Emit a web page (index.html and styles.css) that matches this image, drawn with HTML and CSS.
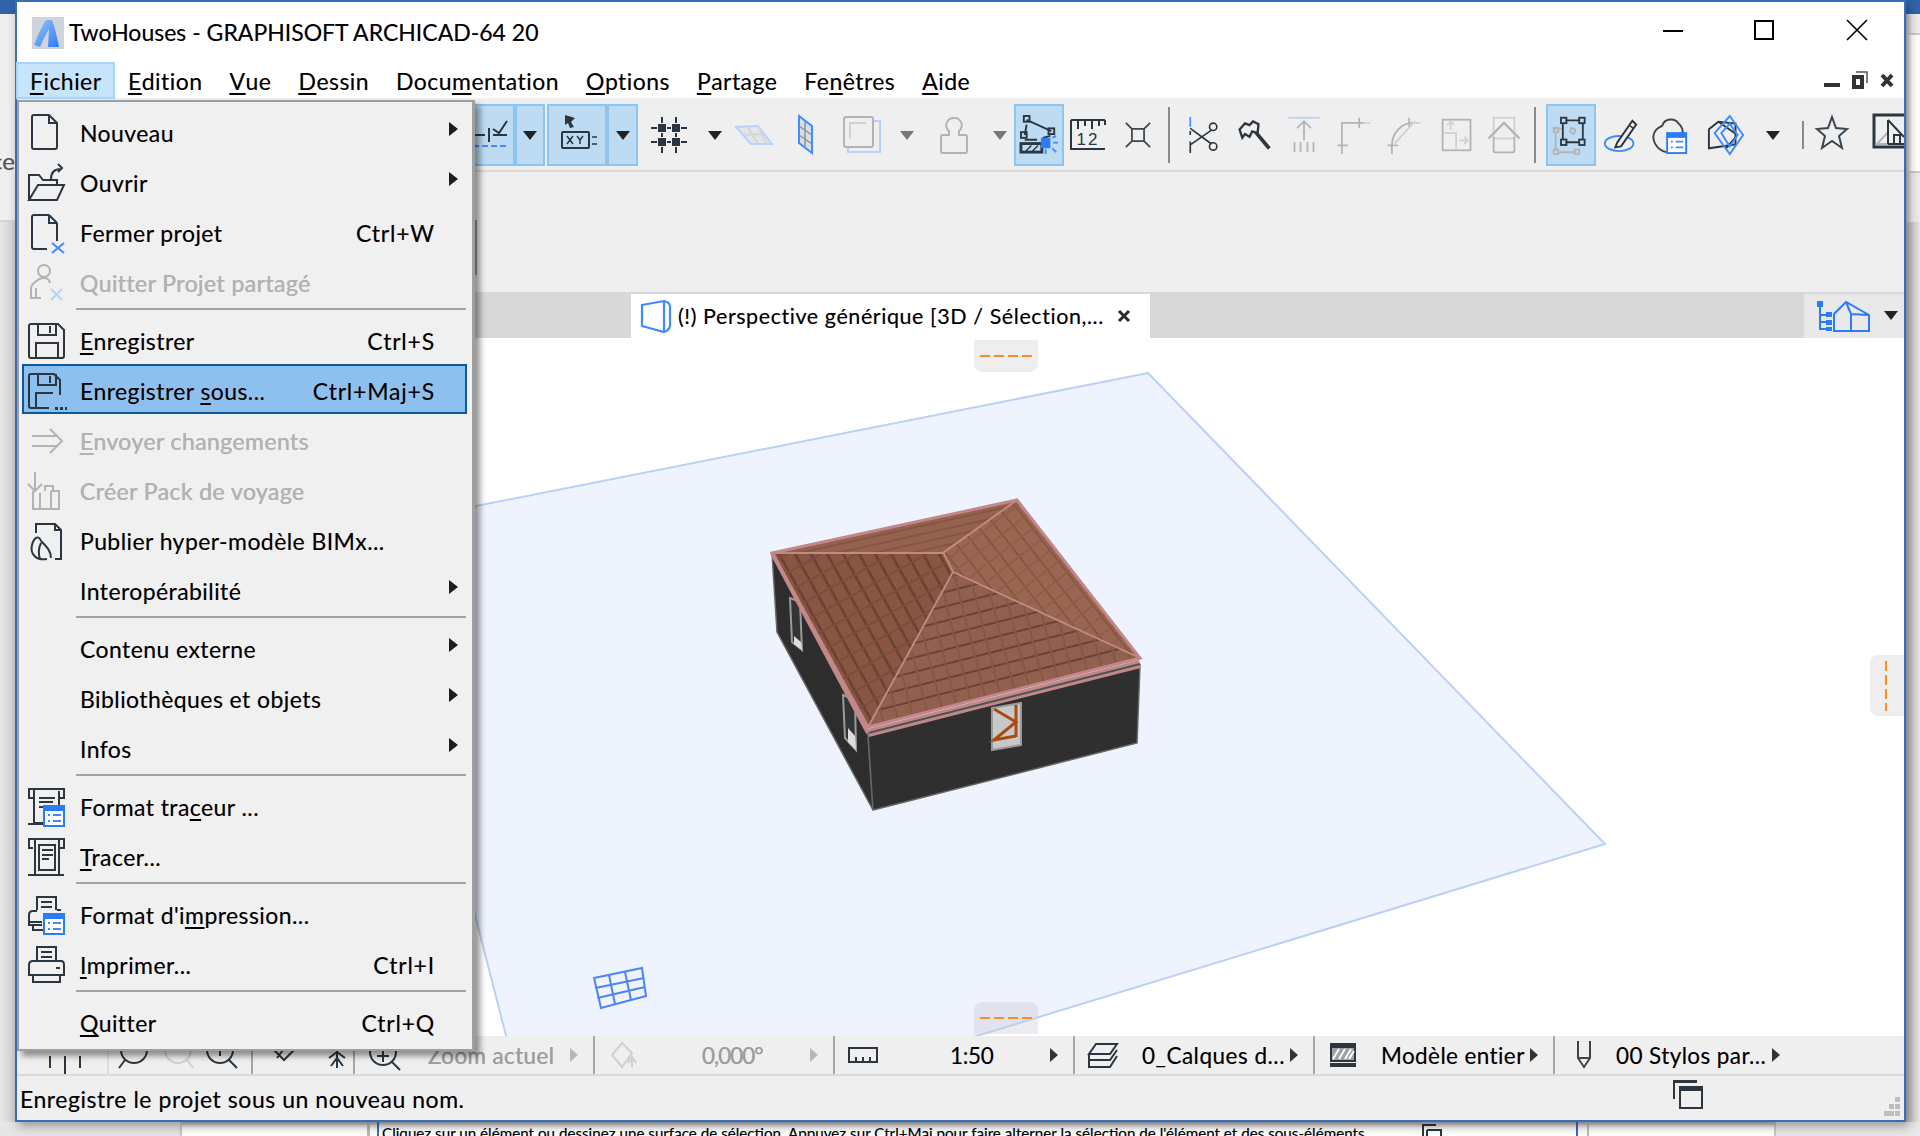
FILE: index.html
```html
<!DOCTYPE html>
<html lang="fr">
<head>
<meta charset="utf-8">
<title>TwoHouses - GRAPHISOFT ARCHICAD-64 20</title>
<link rel="stylesheet" href="styles.css">
</head>
<body>
<div class="side side-left"><div class="side-top"></div><div class="side-text"><span>ce</span></div><div class="side-low"></div></div>
<div class="window">
  <header class="titlebar">
    <svg class="app-icon" width="32" height="32" viewBox="0 0 32 32"><defs><linearGradient id="lg" x1="0" y1="0" x2="1" y2="1"><stop offset="0" stop-color="#9cc3f7"/><stop offset="1" stop-color="#2a7cf8"/></linearGradient></defs><rect width="32" height="32" fill="#cfd3da"/><path d="M2 28 Q8 12 14 3 H20 Q24 14 27 30 H16 L17 12 Q12 20 8 30 Z" fill="url(#lg)"/></svg>
    <span class="title">TwoHouses - GRAPHISOFT ARCHICAD-64 20</span>
    <div class="winctl">
      <svg width="20" height="20" viewBox="0 0 20 20" class="ctl-min"><path d="M0 10H20" stroke="#000" stroke-width="2"/></svg>
      <svg width="20" height="20" viewBox="0 0 20 20" class="ctl-max"><rect x="1" y="1" width="18" height="18" fill="none" stroke="#000" stroke-width="2"/></svg>
      <svg width="20" height="20" viewBox="0 0 20 20" class="ctl-close"><path d="M0 0L20 20M20 0L0 20" stroke="#000" stroke-width="1.6"/></svg>
    </div>
  </header>
  <nav class="menubar">
    <span class="mb-item mb-open"><u>F</u>ichier</span>
    <span class="mb-item"><u>E</u>dition</span>
    <span class="mb-item"><u>V</u>ue</span>
    <span class="mb-item"><u>D</u>essin</span>
    <span class="mb-item">Docu<u>m</u>entation</span>
    <span class="mb-item"><u>O</u>ptions</span>
    <span class="mb-item"><u>P</u>artage</span>
    <span class="mb-item">Fe<u>n</u>êtres</span>
    <span class="mb-item"><u>A</u>ide</span>
    <div class="mdi">
      <svg width="16" height="18" viewBox="0 0 16 18"><rect y="12" width="16" height="4" fill="#333"/></svg>
      <svg width="16" height="18" viewBox="0 0 16 18"><path d="M4 1H15V12" fill="none" stroke="#555" stroke-width="1.5"/><rect x="2" y="6" width="8" height="10" fill="none" stroke="#333" stroke-width="4"/></svg>
      <svg width="14" height="18" viewBox="0 0 14 18"><path d="M2 4L12 15M12 4L2 15" stroke="#333" stroke-width="4"/></svg>
    </div>
  </nav>

  <div class="toolbar">
    <div class="cell on"><svg width="40" height="40" viewBox="0 0 40 40"><path class="s" d="M2 20H14M18 13V27M22 20H36M22 14L28 18 36 6"/><path class="b" d="M2 31H36" stroke-dasharray="6 3"/></svg></div>
    <div class="cell on"><i class="tri"></i></div>
    <div class="cell on gapl"><svg width="40" height="44" viewBox="0 0 40 44"><path d="M8 2L18 5 14 9 17 14 13 15 11 10 8 12Z" fill="#2b3640"/><rect class="s" x="5" y="19" width="27" height="16" rx="1"/><path class="s thin" d="M10 23l6 8M16 23l-6 8M20 23l3 4 3-4M23 27v4M35 24h5M35 31h5"/></svg></div>
    <div class="cell on"><i class="tri"></i></div>
    <div class="cell"><svg width="40" height="40" viewBox="0 0 40 40"><path class="s" d="M2 13H8M18 13H22M32 13H38M2 27H8M18 27H22M32 27H38M13 2V8M13 18V22M13 32V38M27 2V8M27 18V22M27 32V38"/><rect x="9" y="9" width="8" height="8" fill="#2b3640"/><rect x="23" y="9" width="8" height="8" fill="#2b3640"/><rect x="9" y="23" width="8" height="8" fill="#2b3640"/><rect x="23" y="23" width="8" height="8" fill="#2b3640"/></svg></div>
    <div class="cell"><i class="tri"></i></div>
    <div class="cell"><svg width="40" height="40" viewBox="0 0 40 40"><path d="M2 12L24 11 38 29 17 29Z" fill="#e2e5ea" stroke="#b4d2fb" stroke-width="2"/><path d="M9 20L30 19M13 11L24 29M24 11L33 29" stroke="#d4d6da" stroke-width="2"/></svg></div>
    <div class="cell"><svg width="20" height="40" viewBox="0 0 20 40"><path d="M4 1L17 11V38L4 28Z" fill="#d8dde6" stroke="#3f8cff" stroke-width="2"/><path d="M4 11L17 20M4 20L17 29M10 6V33" stroke="#8b949c" stroke-width="1.5"/></svg></div>
    <div class="cell"><svg width="40" height="40" viewBox="0 0 40 40"><path class="bl" d="M6 33V37H38V6H32"/><rect class="g" x="2" y="2" width="29" height="30" rx="2"/><path class="gl" d="M8 24V8H24"/></svg></div>
    <div class="cell"><i class="tri dim"></i></div>
    <div class="cell"><svg width="28" height="40" viewBox="0 0 28 40"><path class="g" d="M9 16C4 12 6 3 14 3S24 12 19 16V20H25Q27 20 27 22V36Q27 38 25 38H3Q1 38 1 36V22Q1 20 3 20H9Z"/></svg></div>
    <div class="cell"><i class="tri dim"></i></div>
    <div class="cell on"><svg width="38" height="40" viewBox="0 0 40 42"><path class="s" d="M7 5L33 17M7 10L5 21M32 22L24 24M5 26L18 26"/><rect class="s" x="4" y="1" width="6" height="6"/><rect class="s" x="1" y="18" width="6" height="6"/><rect class="s" x="30" y="14" width="6" height="6"/><rect x="1" y="30" width="22" height="9" fill="none" stroke="#2b3640" stroke-width="3"/><path class="s thin" d="M6 38L12 32M13 38L19 32"/><rect x="22" y="24" width="10" height="11" fill="#2a7cf8"/><path class="b" d="M34 24L38 22M35 29H40M34 35L38 39M27 36V41"/></svg></div>
    <div class="cell"><svg width="36" height="30" viewBox="0 0 36 30"><path class="s" d="M1 0H35M1 0V29H35M35 0V5M8 0V9M15 0V6M22 0V9M29 0V6"/><text x="18" y="25" class="ruler-num">12</text></svg></div>
    <div class="cell"><svg width="26" height="28" viewBox="0 0 30 30"><path class="sg" d="M1 1L8 8M29 1L22 8M1 29L8 22M29 29L22 22M8 8H22V22H8Z"/></svg></div>
    <div class="cell"><i class="vsep"></i></div>
    <div class="cell"><svg width="36" height="36" viewBox="0 0 38 44"><path class="b" d="M1 0V12"/><path class="s" d="M1 17V22M1 30V44M1 14L27 33M1 34L27 16"/><circle class="s" cx="29" cy="12" r="4.5"/><circle class="s" cx="29" cy="36" r="4.5"/></svg></div>
    <div class="cell"><svg width="38" height="36" viewBox="0 0 38 40"><path class="s wide" d="M3 14L9 7 14 9 18 5 24 8 23 18 17 16 14 22 9 19 6 23Z"/><path d="M21 17L36 35" stroke="#2b3640" stroke-width="4"/></svg></div>
    <div class="cell"><svg width="36" height="38" viewBox="0 0 38 44"><path class="bl" d="M1 2H37"/><path class="g" d="M19 28V6M11 14L19 6 27 14M8 30V42M15 30V42M23 30V42M30 30V42"/></svg></div>
    <div class="cell"><svg width="36" height="38" viewBox="0 0 38 44"><path class="g" d="M5 34V8H30M25 2V14M0 34H12M5 34V44"/><path class="gl" d="M30 8H38"/></svg></div>
    <div class="cell"><svg width="36" height="38" viewBox="0 0 38 44"><path class="g" d="M5 34C5 20 16 8 29 8M25 2V14M0 34H12M5 34V44"/><path class="gl" d="M8 32L32 6M30 8H38"/></svg></div>
    <div class="cell"><svg width="32" height="36" viewBox="0 0 34 40"><rect class="g" x="1" y="3" width="31" height="34"/><path class="gl" d="M1 18H16V37M10 14V6M6 9L10 5 14 9M20 26H29M25 22L29 26 25 30"/></svg></div>
    <div class="cell"><svg width="36" height="38" viewBox="0 0 38 44"><rect class="gl" x="7" y="2" width="24" height="24"/><path class="g wide" d="M1 26L19 8 37 26"/><path class="g" d="M7 24V40Q7 42 9 42H29Q31 42 31 40V24"/></svg></div>
    <div class="cell"><i class="vsep sep-l"></i></div>
    <div class="cell on"><svg width="38" height="40" viewBox="0 0 40 44"><path class="s" d="M14 6H30M33 9V27M14 30H30M11 9V27"/><rect class="s" x="9" y="3" width="6" height="6"/><rect class="s" x="29" y="3" width="6" height="6"/><rect class="s" x="9" y="27" width="6" height="6"/><rect class="s" x="29" y="27" width="6" height="6"/><path class="g" d="M3 20V38M7 41H24M2 15H10"/><rect class="g" x="1" y="38" width="5" height="5"/><rect class="g" x="24" y="38" width="5" height="5"/><rect class="g" x="1" y="14" width="5" height="5"/><path class="g" d="M20 14L25 16 23 21 19 19Z"/></svg></div>
    <div class="cell"><svg width="36" height="38" viewBox="0 0 36 40"><ellipse class="b" cx="16" cy="29" rx="15" ry="8"/><path d="M14 28L30 5 34 9 18 32 12 33Z" fill="#eee" stroke="#2b3640" stroke-width="2"/><path class="s thin" d="M27 10L31 13"/></svg></div>
    <div class="cell"><svg width="38" height="38" viewBox="0 0 40 40"><path class="sg" d="M16 38C6 36 1 26 3 19 5 12 10 12 12 10 14 3 25 1 29 8 33 11 34 16 33 19"/><rect x="17" y="18" width="20" height="21" fill="#fff" stroke="#2a7cf8" stroke-width="2"/><rect x="17" y="18" width="20" height="5" fill="#2a7cf8"/><path class="b" d="M21 27H23M26 27H34M21 33H23M26 33H34"/></svg></div>
    <div class="cell"><svg width="38" height="42" viewBox="0 0 40 44"><path class="s" d="M2 36V16L12 8 30 10V32L2 36Z"/><path class="s" d="M12 8L32 22 20 36"/><path class="bd" d="M24 2L38 22 24 42 8 20Z"/><path class="bd" d="M24 10L32 22 24 34 15 20Z"/></svg></div>
    <div class="cell"><i class="tri"></i></div>
    <div class="cell"><i class="vsep short"></i></div>
    <div class="cell"><svg class="star" width="32" height="36" viewBox="0 0 32 36"><path class="sg" d="M16 2L20 13 31 14 23 21 26 33 16 26 6 33 9 21 1 14 12 13Z"/></svg></div>
    <div class="cell cell-end"><svg class="corner" width="32" height="36" viewBox="0 0 32 36"><path d="M32 2H2V34H32" fill="none" stroke="#2b3640" stroke-width="3"/><path class="g" d="M5 31L16 19V31Z"/><path class="s" d="M16 7V31M16 7L32 24M16 31H32"/><path class="s" d="M22 31V22H28V31"/></svg></div>
  </div>

  <div class="infobox"><i class="infobox-edge"></i></div>

  <div class="tabbar">
    <div class="tab">
      <svg width="32" height="34" viewBox="0 0 32 34"><path d="M2 6L24 2Q30 3 30 8V26Q30 31 24 33L2 27Z" fill="none" stroke="#3d8bff" stroke-width="2.2"/><path d="M24 2V33" stroke="#3d8bff" stroke-width="2.2"/></svg>
      <span class="tab-text">(!) Perspective générique [3D / Sélection,...</span>
      <svg class="tab-close" width="12" height="12" viewBox="0 0 12 12"><path d="M1 1L11 11M11 1L1 11" stroke="#2a2a2a" stroke-width="3"/></svg>
    </div>
    <div class="tab-right">
      <svg width="54" height="32" viewBox="0 0 54 32"><g fill="none" stroke="#2a7cf8" stroke-width="2"><path d="M3 6V29H14M3 15H13M3 22H13"/><path d="M17 31V14L29 2 52 15V31ZM34 31V14M29 2L34 14 52 15"/></g><rect x="0" y="1" width="6" height="6" fill="#2a7cf8"/><rect x="9" y="12" width="6" height="5" fill="#2a7cf8"/><rect x="9" y="20" width="6" height="5" fill="#2a7cf8"/><rect x="9" y="27" width="6" height="4" fill="#2a7cf8"/></svg>
      <i class="tri"></i>
    </div>
  </div>

  <main class="canvas">
    <svg class="scene" width="1887" height="698" viewBox="17 338 1887 698">
      <defs>
        <pattern id="tileF" width="15" height="14" patternUnits="userSpaceOnUse" patternTransform="rotate(-14.2 868 727)"><rect width="15" height="14" fill="#91604e"/><rect y="12" width="15" height="2" fill="#6a4336"/><rect x="13" width="2" height="14" fill="#875744"/></pattern>
        <pattern id="tileL" width="17" height="14" patternUnits="userSpaceOnUse" patternTransform="rotate(61 772 553)"><rect width="17" height="14" fill="#8a5543"/><rect y="0" width="17" height="2.500" fill="#69412f"/><rect x="14" width="2" height="14" fill="#7f4c3b"/></pattern>
        <pattern id="tileR" width="14" height="14" patternUnits="userSpaceOnUse" patternTransform="rotate(52 1017 500)"><rect width="14" height="14" fill="#9a6651"/><rect y="0" width="14" height="2" fill="#865641"/><rect x="12" width="2" height="14" fill="#905d49"/></pattern>
        <pattern id="tileB" width="10" height="8" patternUnits="userSpaceOnUse" patternTransform="rotate(-12.5 772 553)"><rect width="10" height="8" fill="#94614f"/><rect y="6" width="10" height="2" fill="#865542"/></pattern>
      </defs>
      <path d="M1148 373 L1605 844 L800 1090 L520 1090 L375 526Z" fill="#eef3fe" stroke="#bcd0f6" stroke-width="2"/>
      <path d="M772 553L868 735 873 810 777 632Z" fill="#2d2d2d" stroke="#666" stroke-width="1.500"/>
      <path d="M868 735L1140 665 1137 743 873 810Z" fill="#2f2f2f" stroke="#666" stroke-width="1.500"/>
      <path d="M790 598L800 602 802 650 792 642Z" fill="#343434" stroke="#9a9a9a" stroke-width="2"/>
      <path d="M794 636L801 642 802 650 794 644Z" fill="#ddd"/>
      <path d="M843 695L855 700 856 750 845 738Z" fill="#343434" stroke="#9a9a9a" stroke-width="2"/>
      <path d="M848 728L855 736 856 750 848 742Z" fill="#ddd"/>
      <path d="M992 708L1021 703 1021 745 992 750Z" fill="#c8c8c8" stroke="#9a9a9a" stroke-width="2"/>
      <path d="M994 709L1016 722 994 740 1016 736M1016 705V737" fill="none" stroke="#a94a10" stroke-width="3"/>
      <path d="M772 553L1017 500 943 552Z" fill="url(#tileB)"/>
      <path d="M1017 500L1140 658 953 572 943 552Z" fill="url(#tileR)"/>
      <path d="M772 553L943 552 953 572 868 727Z" fill="url(#tileL)"/>
      <path d="M868 727L953 572 1140 658Z" fill="url(#tileF)"/>
      <path d="M772 553L1017 500 1140 658 868 727Z" fill="none" stroke="#c3878a" stroke-width="3"/>
      <path d="M772 553H943L1017 500M943 552L953 572 868 727M953 572L1140 658" fill="none" stroke="#c38a84" stroke-width="1.800"/>
      <path d="M868 733L1140 664" stroke="#c3878a" stroke-width="8"/>
      <path d="M868 733L1140 664" stroke="#4a5453" stroke-width="2"/>
      <path d="M772 553L868 733" stroke="#c3878a" stroke-width="4"/>
    </svg>
    <div class="handle h-top"><i class="dash"></i></div>
    <div class="handle h-bottom"><i class="dash"></i></div>
    <div class="handle h-right"><i class="vdash"></i></div>
    <svg class="gridmark" width="56" height="44" viewBox="0 0 56 44"><g fill="none" stroke="#4d83f5" stroke-width="2"><path d="M2 12L50 2 54 30 9 42Z"/><path d="M3.500 22L52 12M5.500 32L53 21M17 9L23 38M33 6L39 34"/></g></svg>
  </main>

  <div class="statusbar">
    <div class="st st-a"><svg width="40" height="30" viewBox="0 0 40 30"><path class="s" d="M5 18V30M20 18V36M35 18V30"/></svg></div>
    <div class="st st-b">
      <svg width="34" height="34" viewBox="0 0 34 34"><circle class="s" cx="17" cy="14" r="13"/><path class="s" d="M8 24L2 32"/></svg>
      <svg width="34" height="34" viewBox="0 0 34 34"><circle class="gl" cx="17" cy="14" r="13"/><path class="gl" d="M26 24L32 32"/></svg>
      <svg width="34" height="34" viewBox="0 0 34 34"><circle class="s" cx="15" cy="14" r="13"/><path class="s" d="M24 24L32 32M15 8V20"/></svg>
    </div>
    <div class="st st-c">
      <svg width="30" height="34" viewBox="0 0 30 34"><path class="s" d="M3 12L15 24 27 12M8 22L14 14"/></svg>
      <svg width="24" height="34" viewBox="0 0 24 34"><path class="s" d="M12 14V32M4 22L12 16 20 22M6 30L12 22 18 30"/></svg>
    </div>
    <div class="st st-zoom">
      <svg width="32" height="34" viewBox="0 0 32 34"><circle class="s" cx="15" cy="14" r="13"/><path class="s" d="M24 24L32 32M9 18H21M15 12V24"/></svg>
      <span class="st-text t-zoom muted">Zoom actuel</span><i class="rtri dim"></i>
    </div>
    <div class="st st-angle">
      <svg width="28" height="28" viewBox="0 0 28 28"><path class="gl" d="M2 14L12 2 22 12 12 26ZM22 16V26M18 22L22 16 26 22"/></svg>
      <span class="st-text t-angle muted">0,000°</span><i class="rtri dim"></i>
    </div>
    <div class="st st-scale">
      <svg width="30" height="18" viewBox="0 0 30 18"><path class="s" d="M1 2H29V16H1ZM8 16V11M15 16V11M22 16V11"/></svg>
      <span class="st-text t-scale">1:50</span><i class="rtri"></i>
    </div>
    <div class="st st-layer">
      <svg width="30" height="26" viewBox="0 0 30 26"><path class="s" d="M8 2H29L22 12H1ZM1 12V18H22L29 8M1 18V25H22L29 14"/></svg>
      <span class="st-text t-layer">0_Calques d...</span><i class="rtri"></i>
    </div>
    <div class="st st-hatch">
      <svg width="26" height="24" viewBox="0 0 26 24"><rect width="26" height="3" fill="#2b3640"/><rect y="20" width="26" height="4" fill="#2b3640"/><rect x="1" y="4" width="24" height="14" fill="#9aa0a4" stroke="#2b3640" stroke-width="2"/><path d="M3 16L9 6M9 16L15 6M15 16L21 6M19 16L24 8" stroke="#fff" stroke-width="2"/></svg>
      <span class="st-text t-hatch">Modèle entier</span><i class="rtri"></i>
    </div>
    <div class="st st-pen">
      <svg width="16" height="28" viewBox="0 0 16 28"><path class="sg" d="M2 0V17L8 26 14 17V0M2 17H14"/></svg>
      <span class="st-text t-pen">00 Stylos par...</span><i class="rtri"></i>
    </div>
  </div>

  <footer class="messagebar">
    <span class="msg">Enregistre le projet sous un nouveau nom.</span>
    <svg class="msg-icon" width="30" height="30" viewBox="0 0 30 30"><path class="s" d="M1 20V2H24"/><rect x="7" y="8" width="22" height="21" fill="none" stroke="#2b3640" stroke-width="2"/><rect x="7" y="8" width="22" height="4" fill="#2b3640"/><rect x="1" y="1" width="23" height="3" fill="#2b3640"/></svg>
    <svg class="grip" width="16" height="20" viewBox="0 0 16 20"><path fill="#bdbdbd" d="M11 0h5v5h-5zM5 7h5v5H5zM11 7h5v5h-5zM0 14h5v5H0zM5 14h5v5H5zM11 14h5v5h-5z"/></svg>
  </footer>

  <section class="menu">
    <div class="item"><span class="mi"><svg width="40" height="40" viewBox="0 0 40 40"><path class="s" d="M7 2H22L30 10V34A2 2 0 0 1 28 36H7A2 2 0 0 1 5 34V4A2 2 0 0 1 7 2ZM22 2V10H30"/></svg></span><span class="lbl">Nouveau</span><i class="sub"></i></div>
    <div class="item"><span class="mi"><svg width="40" height="40" viewBox="0 0 40 40"><path class="s" d="M2 37V12H12L16 17H30V22M2 37H30L37 22H11Z"/><path class="s" d="M24 16C24 9 28 6 34 6M31 1L35 5 31 9"/></svg></span><span class="lbl">Ouvrir</span><i class="sub"></i></div>
    <div class="item"><span class="mi"><svg width="40" height="40" viewBox="0 0 40 40"><path class="s" d="M30 10V28M22 2L30 10M22 2H7A2 2 0 0 0 5 4V34A2 2 0 0 0 7 36H20M22 2V10H30"/><path class="b" d="M25 30L37 40M37 30L25 40"/></svg></span><span class="lbl">Fermer projet</span><span class="key">Ctrl+W</span></div>
    <div class="item off"><span class="mi"><svg width="40" height="40" viewBox="0 0 40 40"><circle class="g" cx="17" cy="8" r="6"/><path class="g" d="M23 20Q22 15 17 15T7 20Q4 22 4 26V35H14M9 25V35"/><path class="bl" d="M24 26L35 37M35 26L24 37"/></svg></span><span class="lbl">Quitter Projet partagé</span></div>
    <div class="msep"></div>
    <div class="item"><span class="mi"><svg width="40" height="40" viewBox="0 0 40 40"><path class="s" d="M2 5Q2 3 4 3H31L37 9V35Q37 37 35 37H4Q2 37 2 35ZM11 3V14H29V3M23 5V12M9 37V22H31V37"/></svg></span><span class="lbl"><u>E</u>nregistrer</span><span class="key">Ctrl+S</span></div>
    <div class="item sel"><span class="mi"><svg width="40" height="40" viewBox="0 0 40 40"><path class="s" d="M33 24V9L27 3H4Q2 3 2 5V35Q2 37 4 37H22M11 3V14H29V3M23 5V12M9 37V22H26"/><path d="M28 36h3v3h-3zM33 36h3v3h-3zM38 36h2v3h-2z" fill="#2b3640"/></svg></span><span class="lbl">Enregistrer <u>s</u>ous...</span><span class="key">Ctrl+Maj+S</span></div>
    <div class="item off"><span class="mi"><svg width="40" height="40" viewBox="0 0 40 40"><path class="g" d="M5 15H31M5 25H31M23 8L35 20 23 32"/></svg></span><span class="lbl"><u>E</u>nvoyer changements</span></div>
    <div class="item off"><span class="mi"><svg width="40" height="40" viewBox="0 0 40 40"><path class="g" d="M8 1V20M1 13L8 20 15 13M6 20V38H32V20H24M13 38V22M24 38V20M18 20V15H26V20"/></svg></span><span class="lbl">Créer Pack de voyage</span></div>
    <div class="item"><span class="mi"><svg width="40" height="40" viewBox="0 0 40 40"><path class="s" d="M9 12V3H28L34 9V38H28M28 3V9H34"/><path class="s" d="M20 38C8 40 3 32 5 24S12 14 14 20M14 20C20 26 24 30 24 37M13 38C11 32 11 28 14 22"/></svg></span><span class="lbl">Publier hyper-modèle BIMx...</span></div>
    <div class="item"><span class="mi"></span><span class="lbl">Interopérabilité</span><i class="sub"></i></div>
    <div class="msep"></div>
    <div class="item"><span class="mi"></span><span class="lbl">Contenu externe</span><i class="sub"></i></div>
    <div class="item"><span class="mi"></span><span class="lbl">Bibliothèques et objets</span><i class="sub"></i></div>
    <div class="item"><span class="mi"></span><span class="lbl">Infos</span><i class="sub"></i></div>
    <div class="msep"></div>
    <div class="item"><span class="mi"><svg width="40" height="40" viewBox="0 0 40 40"><path class="s" d="M6 11H2V2H37V11H33M7 2V36H24M1 37H20M12 11H28M12 15H26M12 20H20M32 4V18"/><rect x="17" y="19" width="20" height="20" fill="#fff" stroke="#2a7cf8" stroke-width="2"/><rect x="17" y="19" width="20" height="5" fill="#2a7cf8"/><path class="b" d="M21 28H23M26 28H34M21 34H23M26 34H34"/></svg></span><span class="lbl">Format tra<u>c</u>eur ...</span></div>
    <div class="item"><span class="mi"><svg width="40" height="40" viewBox="0 0 40 40"><path class="s" d="M6 11H2V2H37V11H33M8 2V38M32 2V38M1 38H37M12 8H28V33H12ZM15 13H26M15 18H26M15 22H22"/></svg></span><span class="lbl"><u>T</u>racer...</span></div>
    <div class="msep"></div>
    <div class="item"><span class="mi"><svg width="40" height="40" viewBox="0 0 40 40"><path class="s" d="M10 15V2H29V15M14 7H25M14 12H25M10 16H6Q2 16 2 20V30H15M2 27H15M34 15H30M6 30V35H16"/><rect x="17" y="19" width="20" height="20" fill="#fff" stroke="#2a7cf8" stroke-width="2"/><rect x="17" y="19" width="20" height="5" fill="#2a7cf8"/><path class="b" d="M21 28H23M26 28H34M21 34H23M26 34H34"/></svg></span><span class="lbl">Format d'i<u>m</u>pression...</span></div>
    <div class="item"><span class="mi"><svg width="40" height="40" viewBox="0 0 40 40"><path class="s" d="M10 15V2H29V15M14 7H25M14 12H25M6 16H34Q37 16 37 20V30H2V20Q2 16 6 16ZM6 30V37H33V30M29 23H33"/></svg></span><span class="lbl"><u>I</u>mprimer...</span><span class="key">Ctrl+I</span></div>
    <div class="msep"></div>
    <div class="item"><span class="mi"></span><span class="lbl"><u>Q</u>uitter</span><span class="key">Ctrl+Q</span></div>
  </section>
</div>
<div class="side side-right"><div class="side-top"></div><div class="side-panel"></div><div class="side-low side-low-r"></div></div>
<div class="under">
  <div class="u-grey"></div>
  <div class="u-white"></div>
  <div class="u-info"><span class="u-text">Cliquez sur un élément ou dessinez une surface de sélection. Appuyez sur Ctrl+Maj pour faire alterner la sélection de l'élément et des sous-éléments.</span>
    <svg width="20" height="14" viewBox="0 0 20 14"><path class="s" d="M1 12V1H14M5 6H19V14M5 6V14"/></svg>
  </div>
  <div class="u-gap"></div>
  <div class="u-white2"></div>
  <div class="u-grey2"></div>
</div>
</body>
</html>
```

FILE: styles.css
```css
* { box-sizing: border-box; }
html, body { margin: 0; padding: 0; }
body {
  width: 1920px; height: 1136px; overflow: hidden;
  display: grid;
  grid-template-columns: 15px 1891px 14px;
  grid-template-rows: 1122px 14px;
  font-family: "Lato", "Liberation Sans", sans-serif;
  font-size: 23px; color: #000; background: #e8e8e8;
  text-shadow: .5px 0 0 rgba(255,130,0,.3), -.5px 0 0 rgba(0,110,255,.3);
}
svg { display: block; flex: none; overflow: visible; }
u { text-underline-offset: 3px; text-decoration-thickness: 2px; }

.s, .g, .gl, .b, .bl, .sg, .bd { fill: none; stroke-width: 2; }
.s { stroke: #2b3640; }
.sg { stroke: #3c464e; }
.g { stroke: #b3b3b3; }
.gl { stroke: #d0d0d0; }
.b { stroke: #3d8bff; }
.bl { stroke: #b4d2fb; }
.bd { stroke: #3d8bff; }
.thin { stroke-width: 1.5; }
.wide { stroke-width: 2.6; }

/* backdrop */
.side { display: flex; flex-direction: column; }
.side-top { height: 14px; background: #3163ad; flex: none; }
.side-text { height: 208px; padding-top: 134px; color: #555; display: flex; justify-content: flex-end; background: #efefef; line-height: 26px; font-size: 24px; overflow: hidden; white-space: nowrap; border-bottom: 2px solid #d4d4d4; }
.side-low { flex: 1; background: linear-gradient(90deg, #e6e6e6, #d2d2d2); }
.side-panel { height: 140px; margin-top: 19px; margin-bottom: 49px; background: linear-gradient(90deg, #c4c4c4, #efefef 30%, #fff 40%); border-top: 2px solid #ccc; border-bottom: 2px solid #ccc; flex: none; }
.side-low-r { background: linear-gradient(90deg, #b8b8b8, #e6e6e6); }
.side-right { background: linear-gradient(90deg, #c4c4c4, #ececec 40%); }

/* window */
.window {
  position: relative; z-index: 2;
  display: flex; flex-direction: column;
  border: 2px solid #3a6cb8; background: #fff;
  width: 1891px; height: 1122px;
  box-shadow: 3px 4px 10px rgba(0,0,0,.35);
}
.titlebar { height: 60px; display: flex; align-items: center; padding-left: 15px; background: #fff; flex: none; }
.app-icon { margin-top: 2px; }
.title { margin-left: 5px; white-space: nowrap; margin-top: 0; }
.winctl { margin-left: auto; display: flex; align-items: center; margin-right: 37px; }
.ctl-min { margin-right: 71px; margin-top: -3px; }
.ctl-max { margin-right: 73px; margin-top: -5px; }
.ctl-close { margin-top: -5px; }

.menubar { height: 36px; display: flex; align-items: center; flex: none; background: #fff; white-space: nowrap; letter-spacing: .45px; }
.mb-item { height: 37px; padding: 2px 13.5px 0; display: flex; align-items: center; border: 2px solid transparent; border-width: 2px 0; }
.mb-open { background: #c6e4fb; border: 2px solid #a8d5f7; position: relative; z-index: 1; margin-left: -1px; padding: 2px 11px 0 12px; }
.mdi { margin-left: auto; display: flex; align-items: center; gap: 12px; margin-right: 10px; }

.toolbar {
  height: 74px; flex: none; background: #efefef; border-bottom: 2px solid #d9d9d9;
  padding: 6px 0 4px 449px; overflow: hidden;
  display: grid; grid-template-rows: 62px;
  grid-template-columns: 49px 30px 62px 31px 62px 30px 48px 54px 60px 30px 64px 28px 50px 48px 52px 10px 62px 36px 64px 36px 64px 42px 52px 16px 50px 50px 48px 64px 30px 30px 28px 58px;
}
.cell { display: flex; align-items: center; justify-content: center; min-width: 0; }
.on { background: #bddcf4; border: 2px solid #8cc4f2; }
.gapl { margin-left: 2px; }
.cell-end { justify-content: flex-end; overflow: hidden; }
.star { margin: -4px -2px 0; }
.corner { margin-top: -8px; }
.tri { display: block; width: 0; height: 0; border: 7px solid transparent; border-top: 9px solid #222; border-bottom: 0; }
.tri.dim { border-top-color: #777; }
.vsep { display: block; width: 2px; height: 56px; background: #8a8a8a; }
.vsep.short { height: 28px; }
.sep-l { margin-right: 6px; }

.infobox { height: 120px; flex: none; background: #efefef; padding: 48px 0 0 440px; }
.infobox-edge { display: block; width: 20px; height: 55px; border-right: 2px solid #9c9c9c; }

.tabbar { height: 46px; flex: none; background: #d8d8d8; display: flex; padding-top: 2px; }
.tab { margin-left: 614px; width: 519px; background: #fff; display: flex; align-items: center; padding-left: 9px; white-space: nowrap; font-size: 21.5px; letter-spacing: .57px; }
.tab-text { margin-left: 6px; }
.tab-close { margin-left: 14px; }
.tab-right { margin-left: auto; width: 100px; background: #e9e9e9; display: flex; align-items: center; padding-left: 13px; }
.tab-right .tri { margin-left: 13px; margin-top: -2px; }

.canvas { position: relative; height: 698px; flex: none; background: #fff; overflow: hidden; }
.scene { display: block; }
.handle { position: absolute; background: #eee; display: flex; align-items: center; justify-content: center; }
.h-top { left: 957px; top: 2px; width: 64px; height: 32px; border-radius: 0 0 8px 8px; }
.h-bottom { left: 957px; top: 664px; width: 64px; height: 32px; border-radius: 8px 8px 0 0; background: rgba(205,205,215,.38); }
.h-right { right: 0; top: 317px; width: 34px; height: 61px; border-radius: 8px 0 0 8px; }
.dash { display: block; width: 52px; height: 2px; background: repeating-linear-gradient(90deg, #ff8a1e 0 10px, transparent 10px 14px); }
.vdash { display: block; width: 2px; height: 50px; margin-right: 3px; background: repeating-linear-gradient(180deg, #ff8a1e 0 10px, transparent 10px 14px); }
.gridmark { position: absolute; left: 575px; top: 628px; }

.statusbar {
  height: 40px; flex: none; background: #efefef; border-bottom: 2px solid #d9d9d9;
  display: grid; grid-template-columns: 92px 144px 102px 240px 240px 240px 240px 240px 240px;
  white-space: nowrap;
}
.st { display: flex; align-items: center; height: 38px; border-right: 2px solid #a6a6a6; padding-right: 15px; overflow: hidden; font-size: 22.5px; }
.st-a { border-right-color: #dcdcdc; padding-left: 28px; align-items: flex-start; padding-top: 2px; }
.st-b { gap: 10px; padding-left: 8px; padding-right: 0; align-items: flex-start; }
.st-c { gap: 26px; padding-left: 16px; padding-right: 0; align-items: flex-start; }
.st-pen { border-right: 0; }
.st-zoom { padding-left: 13px; }
.st-angle { padding-left: 15px; }
.st-scale { padding-left: 13px; }
.st-layer { padding-left: 13px; }
.st-hatch { padding-left: 15px; }
.st-pen { padding-left: 21px; }
.st-text { white-space: nowrap; }
.t-zoom { margin-left: 28px; letter-spacing: .35px; }
.t-angle { margin-left: 64px; letter-spacing: -1px; }
.t-scale { margin-left: 72px; letter-spacing: -.3px; }
.t-layer { margin-left: 24px; letter-spacing: .5px; }
.t-hatch { margin-left: 25px; letter-spacing: .4px; }
.t-pen { margin-left: 24px; letter-spacing: .4px; }
.muted { color: #9c9c9c; }
.rtri { display: block; margin-left: auto; width: 0; height: 0; border: 7px solid transparent; border-left: 8px solid #333; border-right: 0; }
.rtri.dim { border-left-color: #b8b8b8; }

.messagebar { flex: 1; background: #efefef; display: flex; align-items: center; padding-left: 3px; white-space: nowrap; }
.msg { margin-top: 2px; font-size: 23px; letter-spacing: .54px; }
.msg-icon { margin-left: 1208px; margin-top: -8px; }
.grip { margin-left: auto; margin-right: 4px; margin-top: 18px; }

/* menu */
.menu {
  position: absolute; left: 0; top: 98px; width: 458px; height: 951px; z-index: 5;
  isolation: isolate;
  background: #f0f0f0; border: 2px solid #9f9f9f; border-right-width: 3px; padding-top: 6px;
  box-shadow: 5px 5px 6px rgba(0,0,0,.42);
  letter-spacing: .42px;
}
.item { height: 50px; display: flex; align-items: center; white-space: nowrap; position: relative; }
.mi { width: 61px; flex: none; display: flex; justify-content: flex-start; padding-left: 8px; }
.lbl { flex: 1; }
.key { padding-right: 37px; letter-spacing: .8px; }
.off { color: #b2b2b2; }
.sub { display: block; width: 0; height: 0; margin-right: 14px; margin-top: -8px; border: 7px solid transparent; border-left: 9px solid #1c1c1c; border-right: 0; }
.msep { height: 8px; margin: 0 6px 0 57px; border-top: 2px solid #a3a3a3; }
.sel::before { content: ""; position: absolute; z-index: -1; left: 3px; right: 5px; top: -2px; bottom: 2px; background: #8dbfef; border: 2px solid #0b5a9c; }

/* desktop strip under the window */
.under { grid-column: 1 / -1; display: flex; height: 14px; overflow: hidden; background: #fff; box-shadow: inset 0 5px 4px -2px rgba(0,0,0,.3); position: relative; }
.u-grey { width: 182px; background: #e6e6e6; border-right: 2px solid #c9c9c9; }
.u-white { width: 188px; border-right: 3px solid #b8b8b8; }
.u-info { width: 1201px; margin-left: 7px; border-left: 2px solid #3a6cb8; border-right: 2px solid #3a6cb8; display: flex; padding-left: 3px; white-space: nowrap; font-size: 15.2px; line-height: 18px; padding-top: 2px; }
.u-info svg { margin-left: 54px; }
.u-gap { width: 11px; border-right: 2px solid #bdbdbd; }
.u-white2 { width: 187px; border-right: 2px solid #c9c9c9; }
.u-grey2 { flex: 1; background: #e8e8e8; }
.ruler-num { font-family: "Liberation Sans", sans-serif; font-size: 17px; fill: #2b3640; text-anchor: middle; letter-spacing: 2px; text-shadow: none; }
```
